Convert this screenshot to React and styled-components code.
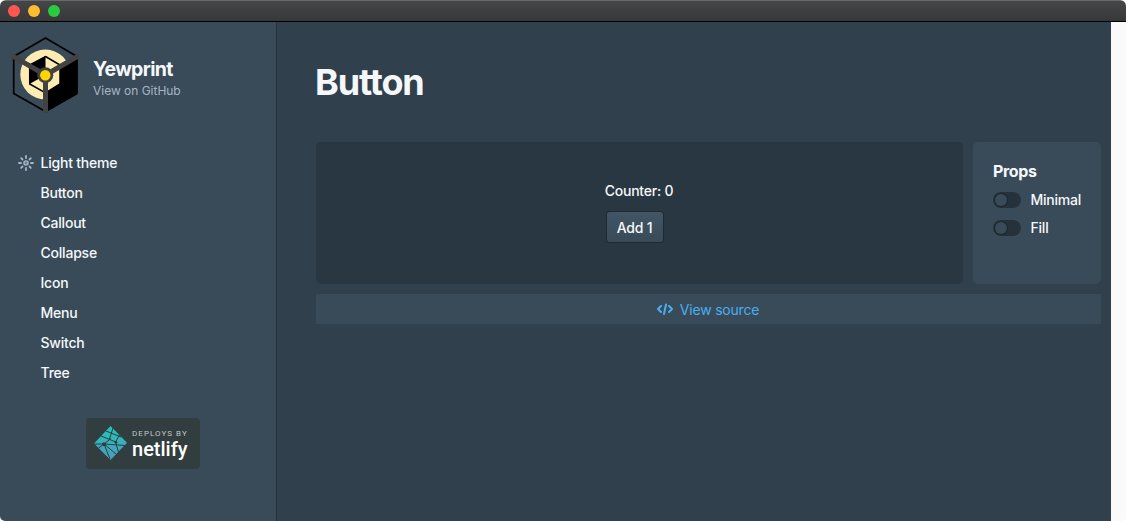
import React from "react";
import styled, { createGlobalStyle } from "styled-components";

const Global = createGlobalStyle`
  * { box-sizing: border-box; }
  html, body { margin: 0; background: #fff; }
  body {
    font-family: Inter, "Liberation Sans", sans-serif; font-size: 14px; line-height: 18px;
    font-weight: 500; letter-spacing: -0.22px; color: #f5f8fa;
  }
  h1, h2, p { margin: 0; }
`;
const Window = styled.div`
  width: 1126px; height: 521px; display: flex; flex-direction: column;
  border-radius: 6px 6px 5px 5px; overflow: hidden; background: #fafafa;
`;
const TitleBar = styled.div`
  height: 22px; flex: none; display: flex; align-items: center; gap: 8px; padding-left: 8px;
  background: linear-gradient(#454647, #373839);
  border-top: 1px solid #68696a; border-bottom: 1px solid #000;
`;
const Light = styled.span`
  width: 12px; height: 12px; border-radius: 50%; background: ${(p) => p.$color};
`;
const Body = styled.div`flex: 1; display: flex; min-height: 0;`;
const Sidebar = styled.aside`
  width: 277px; flex: none; background: #394b59; border-right: 1px solid #25323c;
  display: flex; flex-direction: column;
`;
const Brand = styled.div`display: flex; align-items: center; height: 104px; padding-left: 9px;`;
const BrandText = styled.div`margin: 10px 0 0 12px;`;
const BrandName = styled.h2`font-size: 19.5px; line-height: 22px; font-weight: 700; letter-spacing: -0.65px;`;
const BrandLink = styled.p`font-size: 12px; line-height: 21px; font-weight: 400; color: #a7b6c2; letter-spacing: -0.02px;`;
const Menu = styled.nav`margin-top: 22px; display: flex; flex-direction: column;`;
const MenuItem = styled.a`height: 30px; display: flex; align-items: center; gap: 6.5px; padding-left: 18px;`;
const IconSlot = styled.span`width: 16px; height: 16px; display: flex;`;
const Badge = styled.div`
  margin: 30px 0 0 86px; width: 114px; height: 51px; border-radius: 4px; background: #313d3e;
  display: flex; padding: 8px 0 0 8px;
`;
const BadgeText = styled.div`
  font-family: Roboto, sans-serif; margin: 3px 0 0 5px; white-space: nowrap;
`;
const BadgeSmall = styled.div`font-size: 8px; line-height: 10px; letter-spacing: 1.05px; color: #c3c7c8; font-weight: 400;`;
const BadgeBig = styled.div`font-size: 20px; line-height: 20px; letter-spacing: 0; font-weight: 500; color: #fff;`;
const Main = styled.main`
  width: 834px; background: #30404d; padding: 39px 10px 0 39px; display: flex; flex-direction: column;
`;
const Title = styled.h1`font-size: 36px; line-height: 42px; font-weight: 650; letter-spacing: -1.15px; margin-left: -1px;`;
const Example = styled.div`display: flex; gap: 10px; height: 142px; margin-top: 39px;`;
const Demo = styled.div`
  width: 647px; flex: none; border-radius: 5px; background: #293742;
  display: flex; flex-direction: column; align-items: center; padding: 40px 1px 0 0;
`;
const Button = styled.button`
  margin: 12px 8px 0 0; height: 30px; width: 56px; padding: 2px 1px 0 0; border: 0; border-radius: 3px;
  background: linear-gradient(#425564, #394b59); color: #f5f8fa; font: inherit; letter-spacing: inherit;
  box-shadow: 0 0 0 1px rgba(16, 22, 26, 0.4);
`;
const Props = styled.div`
  flex: 1; min-width: 0; border-radius: 5px; background: #394b59; padding: 20px 0 20px 20px; display: flex; flex-direction: column;
`;
const PropsTitle = styled.h2`font-size: 16px; line-height: 19px; font-weight: 700; letter-spacing: -0.35px; margin-bottom: 10px;`;
const Toggle = styled.label`display: flex; align-items: center; gap: 9.5px; height: 18px; margin-bottom: 10px;`;
const Track = styled.span`
  width: 28px; height: 16px; border-radius: 8px; background: #26323b; padding: 2px; display: flex;
`;
const Knob = styled.span`
  width: 12px; height: 12px; border-radius: 50%; background: #394b59; box-shadow: 0 0 0 1px rgba(16, 22, 26, 0.4);
`;
const Source = styled.a`
  height: 30px; margin-top: 10px; background: #394b59; color: #48aff0; display: flex; font-weight: 400; letter-spacing: -0.2px;
  align-items: center; justify-content: center; gap: 7px; padding: 2px 1px 0 0;
  svg { margin-top: -2px; }
`;

const Logo = () => (
  <svg width="72" height="80" viewBox="9 34 72 80">
    <circle cx="45.3" cy="74.5" r="25" fill="#ffecb3" />
    <path d="M45.5 75 77.3 57V94L45.5 112Z" fill="#000" />
    <path d="M45.5 38 77 56.5V93.5L45.5 111.5 13.7 93.5V56.5Z" fill="none" stroke="#000" strokeWidth="1.7" />
    <path d="M45.5 56.5 60 65V84L45.5 93Z" fill="#ffecb3" />
    <path d="M45.5 56 29.5 65V84L45.5 75Z" fill="#000" />
    <path d="M45.5 56.5 60 65V84L45.5 93 29.7 84V65Z" fill="none" stroke="#000" strokeWidth="1.5" />
    <path d="M45.5 75 14 56.8M45.5 75 76.8 56.8M45.5 75V110.5" stroke="#424242" strokeWidth="5" strokeLinecap="square" />
    <circle cx="45.3" cy="75.2" r="8" fill="#424242" />
    <circle cx="45.3" cy="75.2" r="5.2" fill="#ffd600" />
  </svg>
);
const Flash = () => (
  <svg width="16" height="16" viewBox="0 0 16 16" fill="none" stroke="#a7b6c2" strokeWidth="1.8" strokeLinecap="round">
    <circle cx="8" cy="8" r="2.1" fill="#6f8290" strokeWidth="1.4" />
    <path d="M8 1V3M8 13V15M1 8H3M13 8H15M3.2 3.2 4.5 4.5M11.5 11.5 12.8 12.8M12.8 3.2 11.5 4.5M4.5 11.5 3.2 12.8" />
  </svg>
);
const Code = () => (
  <svg width="16" height="16" viewBox="0 0 16 16" fill="none" stroke="#48aff0" strokeWidth="2" strokeLinecap="round" strokeLinejoin="round">
    <path d="M4 5 1 8 4 11M12 5 15 8 12 11M9 3.5 7 13" />
  </svg>
);
const Netlify = () => (
  <svg width="33" height="34" viewBox="0 0 33 34">
    <defs>
      <linearGradient id="teal" x1="0" y1="0" x2="0" y2="1">
        <stop offset="0" stopColor="#20c6b7" /><stop offset="1" stopColor="#4d9abf" />
      </linearGradient>
    </defs>
    <path d="M16.5 0 33 16.7 16.5 34 0 17.5Z" fill="url(#teal)" />
    <path d="M7 10 22 16M12 5 27 11M19 2 15.5 13M25.5 9 21.5 16 24.5 26M0 18H10L31 19.5M10 18 16 33M10 18 4 22.5M10 18 17 12.5M10 18 22 28" stroke="#313d3e" strokeWidth="1" fill="none" />
    <circle cx="10" cy="18.3" r="2" fill="#313d3e" />
    <circle cx="22" cy="16.3" r="1.4" fill="#313d3e" />
  </svg>
);

export default function App() {
  return (
    <>
      <Global />
      <Window>
        <TitleBar>
          <Light $color="#ff5750" /><Light $color="#ffbc2f" /><Light $color="#29cb41" />
        </TitleBar>
        <Body>
          <Sidebar>
            <Brand>
              <Logo />
              <BrandText>
                <BrandName>Yewprint</BrandName>
                <BrandLink>View on GitHub</BrandLink>
              </BrandText>
            </Brand>
            <Menu>
              <MenuItem><IconSlot><Flash /></IconSlot>Light theme</MenuItem>
              {["Button", "Callout", "Collapse", "Icon", "Menu", "Switch", "Tree"].map((name) => (
                <MenuItem key={name}><IconSlot />{name}</MenuItem>
              ))}
            </Menu>
            <Badge>
              <Netlify />
              <BadgeText>
                <BadgeSmall>DEPLOYS BY</BadgeSmall>
                <BadgeBig>netlify</BadgeBig>
              </BadgeText>
            </Badge>
          </Sidebar>
          <Main>
            <Title>Button</Title>
            <Example>
              <Demo>
                <p>Counter: 0</p>
                <Button>Add 1</Button>
              </Demo>
              <Props>
                <PropsTitle>Props</PropsTitle>
                <Toggle><Track><Knob /></Track>Minimal</Toggle>
                <Toggle><Track><Knob /></Track>Fill</Toggle>
              </Props>
            </Example>
            <Source><Code />View source</Source>
          </Main>
        </Body>
      </Window>
    </>
  );
}
